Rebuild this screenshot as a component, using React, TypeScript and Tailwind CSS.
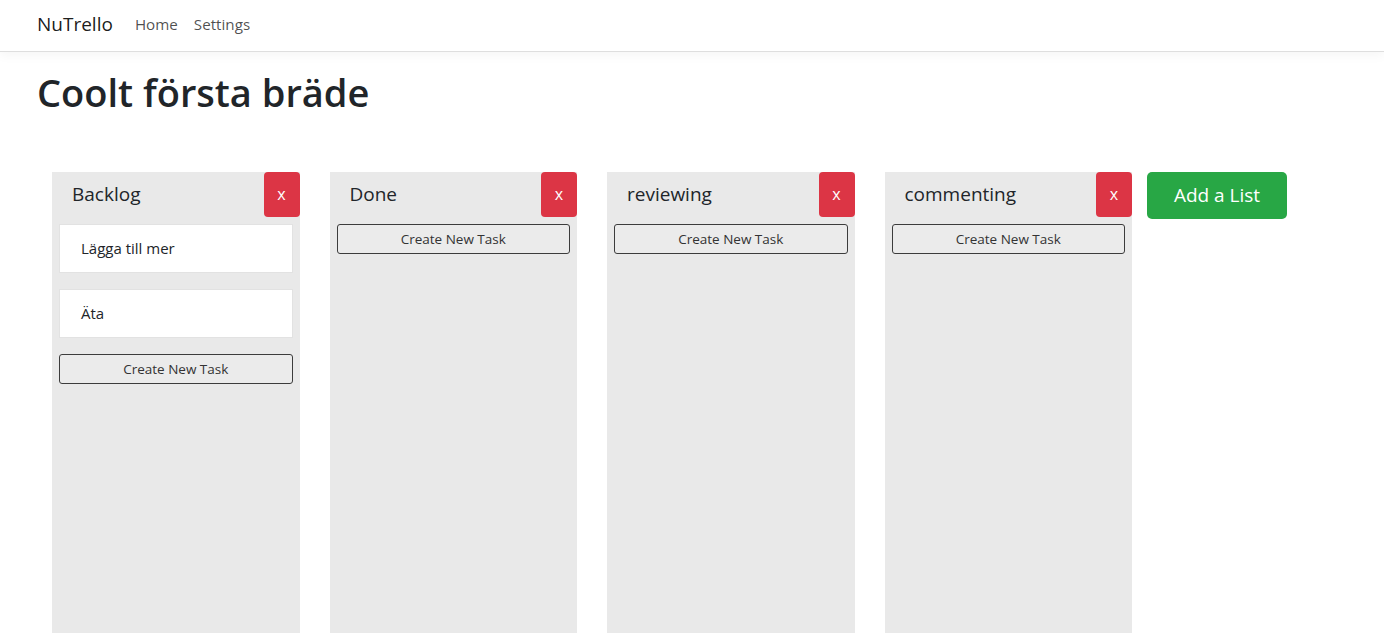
import React from 'react';

type List = { id: string; title: string; tasks: string[] };

const lists: List[] = [
  { id: 'backlog', title: 'Backlog', tasks: ['Lägga till mer', 'Äta'] },
  { id: 'done', title: 'Done', tasks: [] },
  { id: 'reviewing', title: 'reviewing', tasks: [] },
  { id: 'commenting', title: 'commenting', tasks: [] },
];

const BoardList: React.FC<{ list: List }> = ({ list }) => (
  <div className="w-[247.5px] h-[461px] shrink-0 bg-[#e9e9e9]">
    <div className="flex items-center justify-between h-[45px]">
      <h2 className="pl-[20px] text-[19px] leading-none text-[#212529]">{list.title}</h2>
      <button
        type="button"
        className="w-[36px] h-[45px] rounded-[4px] bg-[#dc3545] text-white text-[16px] leading-none"
      >
        x
      </button>
    </div>
    <div className="px-[7px] pt-[7px]">
      {list.tasks.map((task) => (
        <div
          key={task}
          className="h-[49px] mb-[16px] flex items-center px-[21px] bg-white border border-[#e2e2e2] text-[15px] text-[#212529]"
        >
          {task}
        </div>
      ))}
      <button
        type="button"
        className="w-full h-[30px] pt-[1px] rounded-[3px] border border-[#3c3c3c] bg-[#ebebeb] text-[13.5px] text-[#333]"
      >
        Create New Task
      </button>
    </div>
  </div>
);

export default function App() {
  return (
    <div className="min-h-[633px] overflow-hidden bg-white font-['Open_Sans',sans-serif] text-[#212529]">
      <nav className="h-[52px] flex items-center pb-[3px] pl-[37px] border-b border-[#dedede] shadow-[0_4px_10px_rgba(0,0,0,0.04)]">
        <span className="text-[19px] text-black/90 mr-[22px]">NuTrello</span>
        <a className="text-[15.2px] text-black/70 mr-[16px]">Home</a>
        <a className="text-[15.2px] text-black/70">Settings</a>
      </nav>
      <h1 className="mt-[18px] ml-[37px] text-[38px] leading-[1.2] font-semibold text-[#212529]">
        Coolt första bräde
      </h1>
      <div className="mt-[56px] ml-[52px] flex items-start gap-[30px]">
        {lists.map((l) => (
          <BoardList key={l.id} list={l} />
        ))}
        <button
          type="button"
          className="-ml-[15px] w-[140px] h-[47px] rounded-[5px] bg-[#28a745] text-white text-[19px]"
        >
          Add a List
        </button>
      </div>
    </div>
  );
}
